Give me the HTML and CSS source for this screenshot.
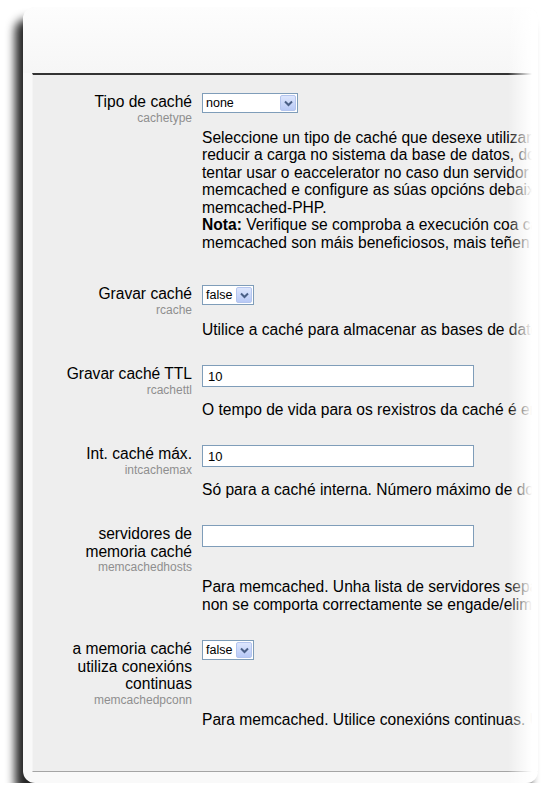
FILE: index.html
```html
<!DOCTYPE html>
<html>
<head>
    <title>Configuración da caché</title>
    <meta charset="UTF-8">
    <link rel="stylesheet" href="styles.css">
</head>
<body>

    <div class="card">
        <div class="header"></div>

        <div class="settings">
            <div class="item first">
                <div class="label">
                    <span class="title">Tipo de caché</span>
                    <span class="name">cachetype</span>
                </div>
                <div class="setting">
                    <div class="select wide">
                        <span class="value">none</span>
                        <span class="arrow"><svg width="9" height="7" viewBox="0 0 9 7"><path d="M1 1.5l3.5 3.5 3.5-3.5" fill="none" stroke="#4a5f86" stroke-width="2"/></svg></span>
                    </div>
                </div>
                <div class="desc">
                    Seleccione un tipo de caché que desexe utilizar ou desactíveo. Isto axuda a<br>
                    reducir a carga no sistema da base de datos, do mesmo xeito que é posible<br>
                    tentar usar o eaccelerator no caso dun servidor web que o admita. Se elixe<br>
                    memcached e configure as súas opcións debaixo, deberá ter instalado<br>
                    memcached-PHP.<br>
                    <b>Nota:</b> Verifique se comproba a execución coa caché activada. Os<br>
                    memcached son máis beneficiosos, mais teñen un custo no servidor.
                </div>
            </div>

            <div class="item">
                <div class="label">
                    <span class="title">Gravar caché</span>
                    <span class="name">rcache</span>
                </div>
                <div class="setting">
                    <div class="select">
                        <span class="value">false</span>
                        <span class="arrow"><svg width="9" height="7" viewBox="0 0 9 7"><path d="M1 1.5l3.5 3.5 3.5-3.5" fill="none" stroke="#4a5f86" stroke-width="2"/></svg></span>
                    </div>
                </div>
                <div class="desc">Utilice a caché para almacenar as bases de datos dos rexistros.</div>
            </div>

            <div class="item">
                <div class="label">
                    <span class="title">Gravar caché TTL</span>
                    <span class="name">rcachettl</span>
                </div>
                <div class="setting">
                    <div class="text-input">10</div>
                </div>
                <div class="desc">O tempo de vida para os rexistros da caché é en segundos.</div>
            </div>

            <div class="item">
                <div class="label">
                    <span class="title">Int. caché máx.</span>
                    <span class="name">intcachemax</span>
                </div>
                <div class="setting">
                    <div class="text-input">10</div>
                </div>
                <div class="desc">Só para a caché interna. Número máximo de documentos.</div>
            </div>

            <div class="item">
                <div class="label">
                    <span class="title">servidores de memoria caché</span>
                    <span class="name">memcachedhosts</span>
                </div>
                <div class="setting">
                    <div class="text-input"></div>
                </div>
                <div class="desc">
                    Para memcached. Unha lista de servidores separados por comas. Memcached<br>
                    non se comporta correctamente se engade/elimina servidores nun cluster.
                </div>
            </div>

            <div class="item">
                <div class="label">
                    <span class="title">a memoria caché utiliza conexións continuas</span>
                    <span class="name">memcachedpconn</span>
                </div>
                <div class="setting">
                    <div class="select">
                        <span class="value">false</span>
                        <span class="arrow"><svg width="9" height="7" viewBox="0 0 9 7"><path d="M1 1.5l3.5 3.5 3.5-3.5" fill="none" stroke="#4a5f86" stroke-width="2"/></svg></span>
                    </div>
                </div>
                <div class="desc">Para memcached. Utilice conexións continuas. Use con coidado.</div>
            </div>
        </div>

        <div class="fade"></div>
    </div>

</body>
</html>
```

FILE: styles.css
```css
body {
    margin: 0;
    background: #fff;
    font-family: "Liberation Sans", Arial, sans-serif;
    color: #000;
}
.card {
    position: relative;
    display: flex;
    flex-direction: column;
    width: 515px;
    height: 776px;
    margin: 7px 0 0 23px;
    background: #f9f9f9;
    border-radius: 12px;
    box-shadow: -8px 12px 10px rgba(0,0,0,0.85);
    overflow: hidden;
}
.header {
    flex: none;
    height: 66px;
    background: linear-gradient(#fdfdfd, #f6f6f6);
}
.settings {
    flex: 1;
    margin: 0 0 11px 9px;
    padding-top: 18px;
    background: #eeeeee;
    border-top: 2px solid #333;
    border-bottom: 1px solid #a5a5a5;
    border-left: 1px solid #f4f4f4;
    overflow: hidden;
}
.item {
    display: grid;
    grid-template-columns: 140px auto;
    column-gap: 10px;
    padding-left: 19px;
    margin-bottom: 27px;
}
.item.first {
    margin-bottom: 34px;
}
.label {
    text-align: right;
}
.title {
    display: block;
    font-size: 15.6px;
    line-height: 17.5px;
}
.name {
    display: block;
    font-size: 12px;
    line-height: 14px;
    color: #8e8e8e;
}
.setting {
    display: flex;
    align-items: flex-start;
}
.desc {
    grid-column: 2;
    margin-top: 4px;
    font-size: 15.6px;
    line-height: 17.5px;
    white-space: nowrap;
}
.select {
    display: flex;
    align-items: center;
    justify-content: space-between;
    box-sizing: border-box;
    width: 52px;
    height: 20px;
    padding: 0 1px 0 3px;
    background: #fff;
    border: 1px solid #7f9db9;
    font-size: 12.5px;
}
.select.wide {
    width: 96px;
}
.arrow {
    display: flex;
    align-items: center;
    justify-content: center;
    box-sizing: border-box;
    width: 16px;
    height: 16px;
    background: linear-gradient(#dde6fd, #b8c9f6);
    border: 1px solid #b4c5ee;
    border-radius: 2px;
}
.text-input {
    box-sizing: border-box;
    width: 272px;
    height: 22px;
    padding: 3px 5px;
    background: #fff;
    border: 1px solid #7f9db9;
    font-size: 13px;
    line-height: 15px;
}
.fade {
    position: absolute;
    top: 0;
    right: 0;
    bottom: 0;
    width: 30px;
    background: linear-gradient(to right, rgba(255,255,255,0), #fff 80%);
}
```
